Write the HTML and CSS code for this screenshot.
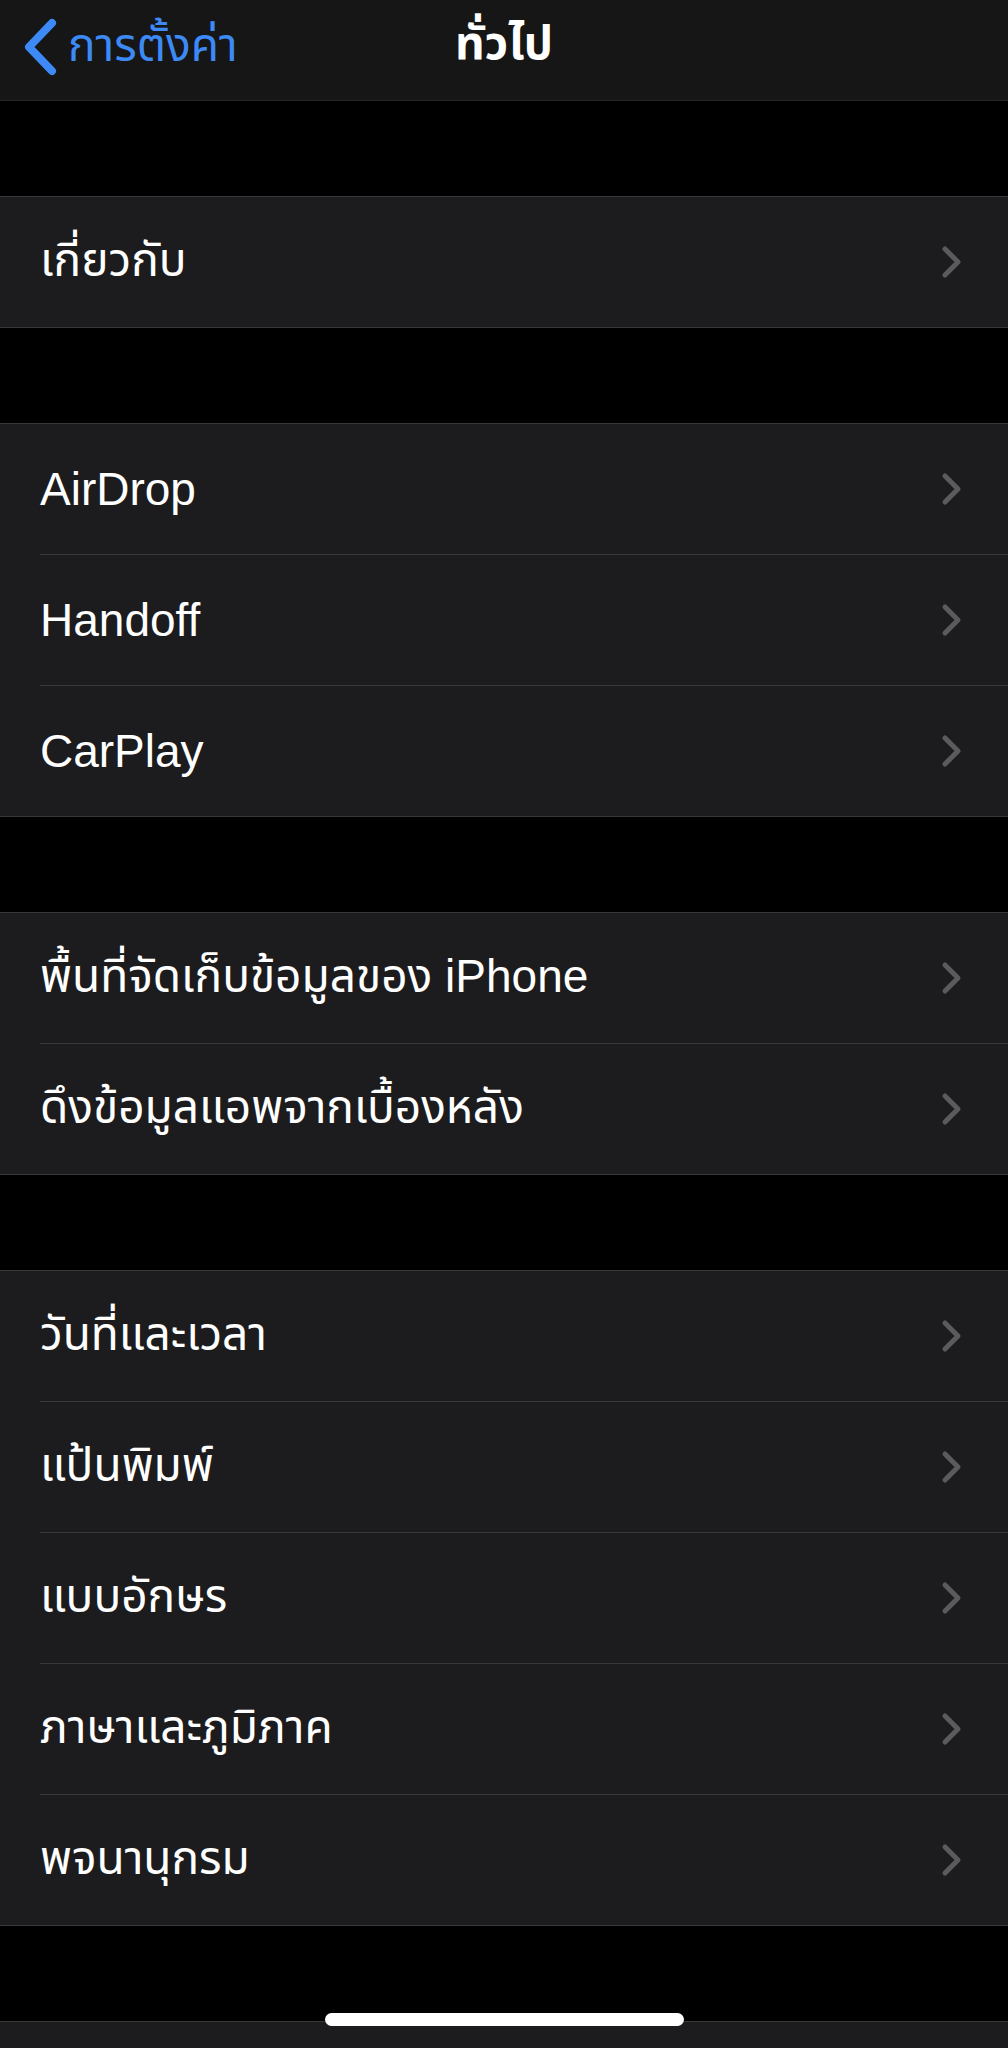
FILE: index.html
```html
<!DOCTYPE html>
<html lang="th">
<head>
    <meta charset="UTF-8">
    <meta name="viewport" content="width=device-width, initial-scale=1.0">
    <title>ทั่วไป</title>
    <link rel="stylesheet" href="styles.css">
</head>
<body>
    <div class="screen">
        <div class="navbar">
            <a class="back" href="#">
                <svg class="back-icon" viewBox="0 0 34 58" width="34" height="58">
                    <path d="M29 5 L6 29 L29 53" fill="none" stroke="currentColor" stroke-width="8" stroke-linecap="round" stroke-linejoin="round"/>
                </svg>
                <span>การตั้งค่า</span>
            </a>
            <h1 class="title">ทั่วไป</h1>
        </div>

        <div class="group">
            <div class="row"><span class="label">เกี่ยวกับ</span><svg class="chevron" viewBox="0 0 22 34" width="22" height="34"><path d="M4 4 L17 17 L4 30"/></svg></div>
        </div>

        <div class="group">
            <div class="row"><span class="label">AirDrop</span><svg class="chevron" viewBox="0 0 22 34" width="22" height="34"><path d="M4 4 L17 17 L4 30"/></svg></div>
            <div class="row"><span class="label">Handoff</span><svg class="chevron" viewBox="0 0 22 34" width="22" height="34"><path d="M4 4 L17 17 L4 30"/></svg></div>
            <div class="row"><span class="label">CarPlay</span><svg class="chevron" viewBox="0 0 22 34" width="22" height="34"><path d="M4 4 L17 17 L4 30"/></svg></div>
        </div>

        <div class="group">
            <div class="row"><span class="label">พื้นที่จัดเก็บข้อมูลของ iPhone</span><svg class="chevron" viewBox="0 0 22 34" width="22" height="34"><path d="M4 4 L17 17 L4 30"/></svg></div>
            <div class="row"><span class="label">ดึงข้อมูลแอพจากเบื้องหลัง</span><svg class="chevron" viewBox="0 0 22 34" width="22" height="34"><path d="M4 4 L17 17 L4 30"/></svg></div>
        </div>

        <div class="group">
            <div class="row"><span class="label">วันที่และเวลา</span><svg class="chevron" viewBox="0 0 22 34" width="22" height="34"><path d="M4 4 L17 17 L4 30"/></svg></div>
            <div class="row"><span class="label">แป้นพิมพ์</span><svg class="chevron" viewBox="0 0 22 34" width="22" height="34"><path d="M4 4 L17 17 L4 30"/></svg></div>
            <div class="row"><span class="label">แบบอักษร</span><svg class="chevron" viewBox="0 0 22 34" width="22" height="34"><path d="M4 4 L17 17 L4 30"/></svg></div>
            <div class="row"><span class="label">ภาษาและภูมิภาค</span><svg class="chevron" viewBox="0 0 22 34" width="22" height="34"><path d="M4 4 L17 17 L4 30"/></svg></div>
            <div class="row"><span class="label">พจนานุกรม</span><svg class="chevron" viewBox="0 0 22 34" width="22" height="34"><path d="M4 4 L17 17 L4 30"/></svg></div>
        </div>

        <!-- next group, only its top edge is on screen -->
        <div class="group">
            <div class="row"></div>
        </div>

        <div class="home-indicator"></div>
    </div>
</body>
</html>
```

FILE: styles.css
```css
body {
    margin: 0;
    padding: 0;
    background: #000;
    font-family: "Liberation Sans", "Noto Sans Thai", "Noto Sans", "DejaVu Sans", sans-serif;
    color: #fff;
}
.screen {
    position: relative;
    width: 1008px;
    height: 2048px;
    overflow: hidden;
}
.navbar {
    position: relative;
    height: 90px;
    padding-bottom: 10px;
    background: #161616;
    border-bottom: 1px solid #262628;
    display: flex;
    align-items: center;
    justify-content: center;
}
.back {
    position: absolute;
    left: 23px;
    top: 12px;
    display: flex;
    align-items: center;
    gap: 11px;
    color: #3d8af7;
    text-decoration: none;
    font-size: 46px;
}
.back-icon {
    display: block;
}
.title {
    margin: 0;
    font-size: 46px;
    font-weight: bold;
}
.group {
    margin-top: 95px;
    background: #1c1c1e;
    border-top: 1px solid #38383a;
    border-bottom: 1px solid #38383a;
}
.row {
    height: 130px;
    margin-left: 40px;
    padding-right: 45px;
    display: flex;
    align-items: center;
    justify-content: space-between;
}
.row + .row {
    border-top: 1px solid #38383a;
}
.label {
    font-size: 46px;
}
.chevron {
    display: block;
    fill: none;
    stroke: #5a5a5f;
    stroke-width: 5;
    stroke-linecap: round;
    stroke-linejoin: round;
}
.home-indicator {
    position: absolute;
    left: 325px;
    top: 2013px;
    width: 359px;
    height: 13px;
    border-radius: 7px;
    background: #fff;
}
```
